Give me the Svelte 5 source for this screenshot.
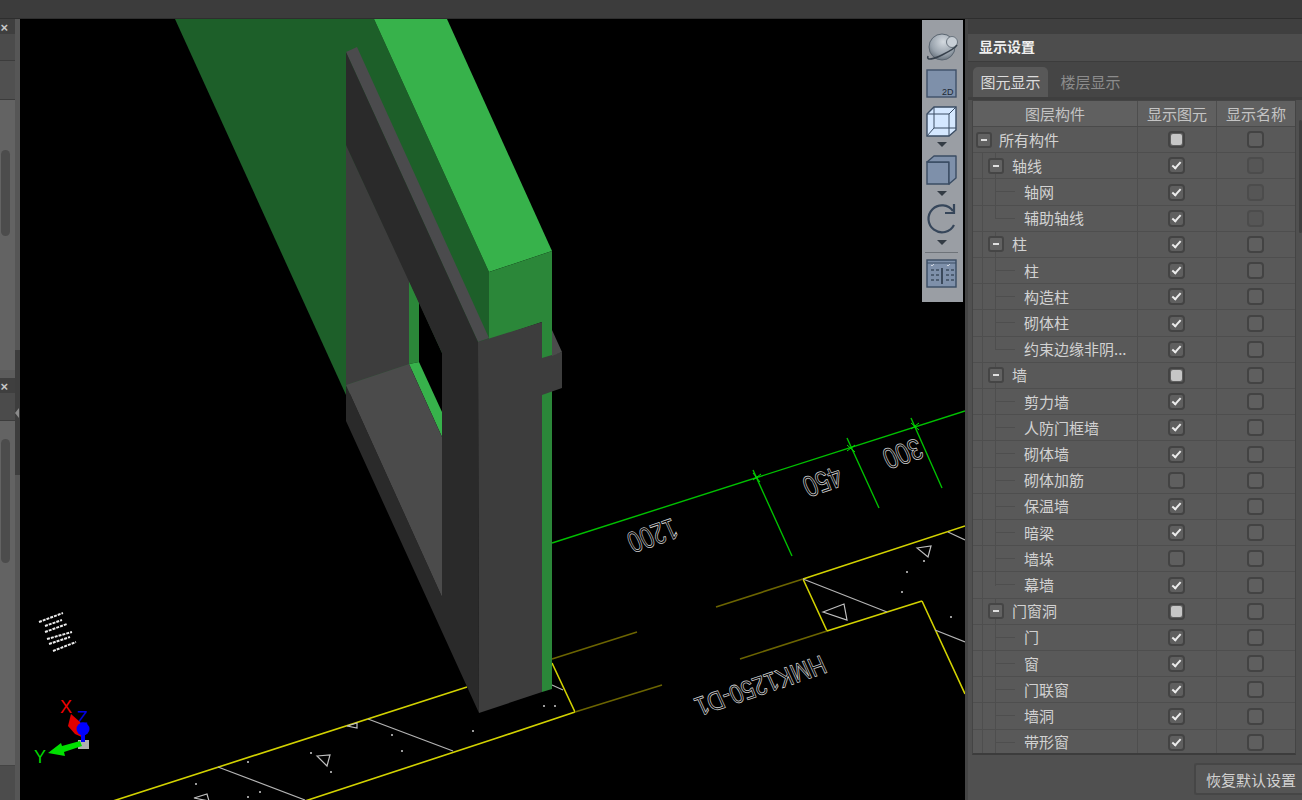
<script>
  const rows = [
    { level: 0, label: '所有构件', shape: 'part', name: 'off' },
    { level: 1, label: '轴线', shape: 'on', name: 'dis' },
    { level: 2, label: '轴网', shape: 'on', name: 'dis' },
    { level: 2, label: '辅助轴线', shape: 'on', name: 'dis' },
    { level: 1, label: '柱', shape: 'on', name: 'off' },
    { level: 2, label: '柱', shape: 'on', name: 'off' },
    { level: 2, label: '构造柱', shape: 'on', name: 'off' },
    { level: 2, label: '砌体柱', shape: 'on', name: 'off' },
    { level: 2, label: '约束边缘非阴...', shape: 'on', name: 'off' },
    { level: 1, label: '墙', shape: 'part', name: 'off' },
    { level: 2, label: '剪力墙', shape: 'on', name: 'off' },
    { level: 2, label: '人防门框墙', shape: 'on', name: 'off' },
    { level: 2, label: '砌体墙', shape: 'on', name: 'off' },
    { level: 2, label: '砌体加筋', shape: 'off', name: 'off' },
    { level: 2, label: '保温墙', shape: 'on', name: 'off' },
    { level: 2, label: '暗梁', shape: 'on', name: 'off' },
    { level: 2, label: '墙垛', shape: 'off', name: 'off' },
    { level: 2, label: '幕墙', shape: 'on', name: 'off' },
    { level: 1, label: '门窗洞', shape: 'part', name: 'off' },
    { level: 2, label: '门', shape: 'on', name: 'off' },
    { level: 2, label: '窗', shape: 'on', name: 'off' },
    { level: 2, label: '门联窗', shape: 'on', name: 'off' },
    { level: 2, label: '墙洞', shape: 'on', name: 'off' },
    { level: 2, label: '带形窗', shape: 'on', name: 'off' }
  ];

  const dots = [
    [311, 753], [331, 772], [248, 762], [392, 735], [402, 751], [473, 731], [196, 784], [260, 792],
    [248, 797], [924, 561], [907, 572], [902, 592], [951, 617], [555, 706], [544, 706]
  ];

  const triangles = [
    '823,612 844,604 847,620',
    '917,548 931,546 928,557',
    '317,756 330,755 327,766',
    '347,726 357,723 357,728',
    '194,798 207,794 209,801'
  ];

  // upside-down annotation text follows the slab's projected axes
  const labels = [
    { text: '1200', x: 672, y: 518, len: 50, cls: 'dim' },
    { text: '450', x: 837, y: 466, len: 39, cls: 'dim' },
    { text: '300', x: 917, y: 438, len: 39, cls: 'dim' },
    { text: 'HMK1250-D1', x: 821, y: 655, len: 136, cls: 'mark' }
  ];

  const isLast = (i) => rows[i].level === 2 && (i === rows.length - 1 ? false : rows[i + 1].level < 2);
</script>

<div class="app">
  <header class="topbar"></header>

  <aside class="dock">
    <div class="dock__panels">
      <section class="mini mini--first">
        <div class="mini__head">×</div>
        <div class="mini__band"></div>
        <div class="mini__band mini__band--b"></div>
        <div class="mini__body"><span class="thumb"></span></div>
      </section>
      <section class="mini mini--second">
        <div class="mini__head">×</div>
        <div class="mini__band mini__band--c"></div>
        <div class="mini__body"><span class="thumb thumb--long"></span></div>
        <div class="mini__foot"></div>
      </section>
    </div>
    <div class="splitter">
      <span class="splitter__grip"></span>
    </div>
  </aside>

  <main class="viewport">
    <svg class="scene" viewBox="0 0 945 781" width="945" height="781">
      <g transform="translate(-20 -19)">
        <!-- plan lines -->
        <g fill="none" stroke-width="1.6">
          <path stroke="#00c000" stroke-width="1.4" d="M552 543L965 411M753 470L792 556M847 438L879 508M911 418L942 488" />
          <path stroke="#00e000" stroke-width="1" d="M753 480L761 474M753 473L760 482M847 451L855 445M847 445L855 452M911 429L919 423M911 423L919 430" />
          <path stroke="#d2d200" d="M965 526L803 579M922 601L827 631M467 687L113 801M575 712L500 737L305 801M803 579L827 631M922 601L965 694M552 663L575 712" />
          <path stroke="#6b6400" d="M803 579L716 607M637 632L552 659M827 631L740 659M662 685L575 712" />
          <path stroke="#b4b4b4" stroke-width="1.2" d="M803 579L887 612M935 630L965 642M948 532L965 540M552 685L563 690M368 719L453 751M218 767L305 800" />
        </g>
        {#each triangles as points}
          <polygon {points} fill="none" stroke="#c0c0c0" stroke-width="1.2" />
        {/each}
        {#each dots as [cx, cy]}
          <rect x={cx - 1} y={cy - 1} width="2" height="2" fill="#9a9a9a" />
        {/each}
        {#each labels as l}
          <text class={l.cls} transform="matrix(-0.945 0.326 -0.41 -0.91 {l.x} {l.y})" textLength={l.len} lengthAdjust="spacingAndGlyphs">{l.text}</text>
        {/each}

        <!-- wall -->
        <polygon fill="#1d5f29" points="175,19 374,19 489,272 489,340 346,395" />
        <polygon fill="#37b24b" points="374,19 447,19 552,251 489,272" />
        <polygon fill="#2b8739" points="489,272 552,251 552,689 542,692 542,322 489,340" />

        <!-- door frame -->
        <polygon fill="#4b4b4d" points="346,52 357,47 489,338 478,342" />
        <polygon fill="#3d3d3d" points="346,145 409,280 409,364 346,385" />
        <polygon fill="#000" points="409,280 442,353 442,437 409,364" />
        <polygon fill="#2b8739" points="409,280 419,302 419,362 409,364" />
        <polygon fill="#37b24b" points="409,364 419,362 442,412 442,437" />
        <polygon fill="#2a2a2a" points="346,52 478,342 479,713 346,421 346,385 442,597 442,353 346,145" />
        <polygon fill="#4b4b4b" points="346,385 409,364 442,437 442,597" />
        <polygon fill="#3d3d3d" points="478,342 542,322 542,358 562,352 562,388 542,395 542,692 479,713" />
        <polygon fill="#4b4b4b" points="552,330 562,352 552,356" />

        <!-- view cube gizmo -->
        <text class="axis" x="60" y="713" fill="#f00000">X</text>
        <text class="axis" x="77" y="724" fill="#0000e6">Z</text>
        <text class="axis" x="34" y="763" fill="#00d800">Y</text>
        <polygon fill="#e00000" points="71,714 80,722 84,738 75,734 68,726" />
        <rect x="78" y="740" width="11" height="9" fill="#b0b0b0" />
        <polygon fill="#00e000" points="48,753 61,743 62,746 80,741 82,746 64,752 65,756" />
        <rect x="81" y="732" width="4" height="10" fill="#0000ff" />
        <circle cx="83" cy="729" r="6.5" fill="#0000ff" />

        <!-- small legend text far off in the plan -->
        <g fill="none" stroke="#ececec" stroke-width="2" stroke-dasharray="3 1">
          <path d="M39 622L63 613M45 626L62 620M45 632L67 624M47 639L72 632M49 644L70 637M53 651L76 642" />
        </g>
      </g>
    </svg>

    <nav class="tools">
      <svg class="tools__art" viewBox="0 0 41 282" width="41" height="282">
        <defs>
          <radialGradient id="ball" cx="0.55" cy="0.3" r="0.8">
            <stop offset="0" stop-color="#d4dae0" />
            <stop offset="0.6" stop-color="#98a2ac" />
            <stop offset="1" stop-color="#55606b" />
          </radialGradient>
        </defs>
        <!-- orbit -->
        <circle cx="20" cy="27" r="13" fill="url(#ball)" stroke="#5a6570" />
        <circle cx="30" cy="22" r="5.500" fill="#c8cfd6" stroke="#6a747e" />
        <path d="M6 36C4 41 12 39 20 35C28 31 34 27 35 25" fill="none" stroke="#36404b" stroke-width="1.6" />
        <!-- 2D -->
        <rect x="5" y="50" width="29" height="27" fill="#7e90aa" stroke="#3f5068" stroke-width="1.4" />
        <text class="tools__tag" x="20" y="75">2D</text>
        <!-- wire cube -->
        <path d="M5 94L12 87H34V110L27 116H5Z" fill="#d5e8ff" stroke="#3a4c63" stroke-width="1.4" />
        <path d="M5 94H27V116M27 94L34 87M12 87V108H34M12 108L5 116" fill="none" stroke="#3a4c63" />
        <polygon points="15,122 25,122 20,127" fill="#333b44" />
        <!-- solid cube -->
        <path d="M5 142H27V164H5Z" fill="#7e90aa" stroke="#3a4c63" stroke-width="1.4" />
        <path d="M5 142L12 136H34V158L27 164V142Z" fill="#7e90aa" stroke="#3a4c63" stroke-width="1.4" stroke-linejoin="round" />
        <polygon points="15,171 25,171 20,176" fill="#333b44" />
        <!-- rotate -->
        <path d="M31 191A13.500 13.500 0 1 0 32 205" fill="none" stroke="#36465a" stroke-width="2.200" />
        <path d="M23 193L32 193L32 184" fill="none" stroke="#36465a" stroke-width="2.200" />
        <polygon points="15,220 25,220 20,225" fill="#333b44" />
        <path d="M3 232.500H36" stroke="#6e7379" />
        <!-- layer list -->
        <rect x="5" y="240" width="29" height="27" fill="#7e90aa" stroke="#3a4c63" stroke-width="1.4" />
        <path d="M5 243H34" stroke="#3a4c63" />
        <path d="M20 248V264" stroke="#1f2c3a" stroke-width="1.4" />
        <path d="M9 245l1 1 2-2M25 245l1 1 2-2" fill="none" stroke="#e6e9ec" stroke-width="0.8" />
        <path d="M9 250h3m2 0h3M9 255h3m2 0h3M9 260h3m2 0h3M24 250h3m2 0h3M24 255h3m2 0h3M24 260h3m2 0h3" stroke="#1f2c3a" stroke-width="1.2" />
      </svg>
    </nav>
  </main>

  <aside class="panel">
    <div class="panel__gap"></div>
    <h2 class="panel__title">显示设置</h2>
    <div class="tabs">
      <button class="tab tab--active">图元显示</button>
      <button class="tab">楼层显示</button>
    </div>
    <div class="table">
      <div class="row row--head">
        <div class="cell">图层构件</div>
        <div class="cell">显示图元</div>
        <div class="cell">显示名称</div>
      </div>
      {#each rows as row, i}
        <div class="row">
          <div class="cell cell--tree tree-{row.level}">
            {#if row.level > 0}<span class="rail rail--outer"></span>{/if}
            {#if row.level > 0}<span class="rail" class:rail--last={isLast(i)}></span>{/if}
            {#if row.level === 2}<span class="stub"></span>{/if}
            {#if row.level < 2}<span class="fold"></span>{/if}
            <span class="label">{row.label}</span>
          </div>
          <div class="cell cell--box"><span class="check check--{row.shape}"></span></div>
          <div class="cell cell--box"><span class="check check--{row.name}"></span></div>
        </div>
      {/each}
    </div>
    <span class="scroll"></span>
    <div class="panel__foot">
      <button class="restore">恢复默认设置</button>
    </div>
  </aside>
</div>

<style>
  :global(body) {
    margin: 0;
    background: #000;
  }

  .app {
    display: grid;
    grid-template-columns: 20px 945px 337px;
    grid-template-rows: 19px 781px;
    width: 1302px;
    height: 800px;
    overflow: hidden;
    font-family: "Noto Sans CJK SC", "Noto Sans", sans-serif;
  }

  .topbar {
    grid-column: 1 / -1;
    background: #3c3c3c;
    border-bottom: 1px solid #2e2e2e;
    box-sizing: border-box;
  }

  .dock {
    display: flex;
    background: #565656;
  }

  .dock__panels {
    width: 15px;
    display: flex;
    flex-direction: column;
  }

  .mini {
    display: flex;
    flex-direction: column;
    overflow: hidden;
  }

  .mini--first {
    height: 359px;
  }

  .mini--second {
    flex: 1;
  }

  .mini__head {
    height: 15px;
    flex: none;
    background: #3f3f3f;
    color: #c8c8c8;
    font: 700 13px/17px "Liberation Sans", sans-serif;
    text-align: right;
    padding-right: 7px;
    box-sizing: border-box;
    overflow: hidden;
  }

  .mini__band {
    height: 27px;
    flex: none;
    background: #4b4b4b;
    border-bottom: 1px solid #3c3c3c;
    box-sizing: border-box;
  }

  .mini__band--b {
    height: 39px;
    background: #505050;
  }

  .mini__band--c {
    height: 28px;
  }

  .mini__body {
    flex: 1;
    background: #636363;
    padding: 50px 5px 0 1px;
    border-bottom: 8px solid #5c5c5c;
    box-sizing: border-box;
  }

  .mini--second .mini__body {
    padding-top: 18px;
    border-bottom: 0;
  }

  .thumb {
    display: block;
    width: 9px;
    height: 86px;
    border-radius: 5px;
    background: #4c4c4c;
  }

  .thumb--long {
    height: 124px;
  }

  .mini__foot {
    height: 34px;
    flex: none;
    background: #4c4c4c;
    border-top: 1px solid #444;
  }

  .splitter {
    position: relative;
    width: 5px;
    background: linear-gradient(#565656 331px, #3d3d3d 331px, #3d3d3d 456px, #565656 456px);
  }

  .splitter__grip {
    position: absolute;
    top: 389px;
    left: 0;
    border: 5px solid transparent;
    border-left-width: 0;
    border-right: 4px solid #8a8a8a;
  }

  .viewport {
    position: relative;
    background: #000;
    overflow: hidden;
  }

  .scene {
    display: block;
  }

  .dim,
  .mark {
    font-family: "Liberation Sans", sans-serif;
    fill: none;
    stroke: #d0d0d0;
    stroke-width: 0.8px;
  }

  .dim {
    font-size: 30px;
  }

  .mark {
    font-size: 27px;
  }

  .axis {
    font: 400 18px "Liberation Sans", sans-serif;
  }

  .tools {
    position: absolute;
    top: 1px;
    left: 902px;
    width: 41px;
    height: 282px;
    background: #9a9ea4;
  }

  .tools__art {
    display: block;
  }

  .tools__tag {
    font: 400 9px "Liberation Sans", sans-serif;
    fill: #1d2833;
  }

  .panel {
    position: relative;
    display: flex;
    flex-direction: column;
    background: #505050;
    border-left: 3px solid #454545;
    box-sizing: border-box;
    color: #d2d2d2;
  }

  .panel__gap {
    height: 15px;
    flex: none;
    background: #3f3f3f;
  }

  .panel__title {
    height: 27px;
    flex: none;
    margin: 0;
    padding-left: 11px;
    background: #4d4d4d;
    border-bottom: 1px solid #3c3c3c;
    box-sizing: content-box;
    color: #f0f0f0;
    font-size: 14px;
    font-weight: 700;
    line-height: 25px;
  }

  .tabs {
    height: 35px;
    flex: none;
    display: flex;
    align-items: flex-end;
    padding-left: 5px;
    background: #454545;
    border-bottom: 3px solid #3f3f3f;
    box-sizing: content-box;
  }

  .tab {
    width: 75px;
    height: 30px;
    padding: 0;
    border: 0;
    border-radius: 5px 5px 0 0;
    background: transparent;
    color: #8c8c8c;
    font: inherit;
    font-size: 15px;
    line-height: 28px;
    text-align: center;
  }

  .tab + .tab {
    margin-left: 5px;
  }

  .tab--active {
    background: #585858;
    color: #dcdcdc;
  }

  .table {
    width: 324px;
    height: 655px;
    margin-left: 4px;
    flex: none;
    background: #595959;
    border: 1px solid #444;
    border-bottom: 2px solid #3c3c3c;
    box-sizing: border-box;
    overflow: hidden;
  }

  .row {
    display: grid;
    grid-template-columns: 165px 79px 79px;
    height: 26.217px;
    box-sizing: border-box;
    border-bottom: 1px solid #4e4e4e;
  }

  .row--head {
    height: 26px;
    background: #606060;
    color: #c4c4c4;
    font-size: 15px;
    border-bottom: 1px solid #4a4a4a;
  }

  .cell {
    position: relative;
    display: flex;
    align-items: center;
    justify-content: center;
    border-right: 1px solid #4e4e4e;
  }

  .cell--box {
    padding-right: 2px;
  }

  .row--head .cell {
    line-height: 24px;
  }

  .cell--tree {
    justify-content: flex-start;
    font-size: 15px;
    line-height: 24px;
    white-space: nowrap;
    color: #d2d2d2;
  }

  .tree-0 {
    padding-left: 3px;
  }

  .tree-1 {
    padding-left: 15px;
  }

  .tree-2 {
    padding-left: 51px;
  }

  .fold {
    position: relative;
    flex: none;
    width: 16px;
    height: 16px;
    margin-right: 7px;
    background: #626262;
    border: 2px solid #454545;
    border-radius: 3px;
    box-sizing: border-box;
  }

  .fold::after {
    content: "";
    position: absolute;
    left: 3px;
    top: 5px;
    width: 6px;
    height: 2px;
    background: #e0e0e0;
  }

  .tree-1 .fold {
    margin-right: 8px;
  }

  .rail {
    position: absolute;
    left: 22px;
    top: -1px;
    bottom: 0;
    width: 1px;
    background: #4e4e4e;
  }

  .rail--outer {
    left: 9px;
  }

  .rail--last {
    bottom: 12px;
  }

  .stub {
    position: absolute;
    left: 22px;
    top: 12px;
    width: 20px;
    height: 1px;
    background: #4e4e4e;
  }

  .check {
    display: block;
    position: relative;
    width: 17px;
    height: 17px;
    background: #5f5f5f;
    border: 2px solid #434343;
    border-radius: 4px;
    box-sizing: border-box;
  }

  .check--dis {
    background: #565656;
    border-color: #4c4c4c;
  }

  .check--part::after {
    content: "";
    position: absolute;
    inset: 1px;
    border-radius: 2px;
    background: #c6c6c6;
  }

  .check--on::after {
    content: "";
    position: absolute;
    left: 4px;
    top: 1px;
    width: 3px;
    height: 7px;
    border: solid #ececec;
    border-width: 0 2px 2px 0;
    transform: rotate(42deg);
  }

  .scroll {
    position: absolute;
    right: 0;
    top: 101px;
    width: 3px;
    height: 113px;
    background: #3f3f3f;
    border-radius: 2px;
  }

  .panel__foot {
    flex: 1;
    display: flex;
    justify-content: flex-end;
    padding-top: 8px;
    overflow: hidden;
  }

  .restore {
    width: 108px;
    height: 32px;
    flex: none;
    padding: 0 0 0 10px;
    background: #555;
    border: 2px solid #464646;
    border-right: 0;
    border-radius: 3px 0 0 3px;
    color: #d2d2d2;
    font: inherit;
    font-size: 15px;
    text-align: left;
    white-space: nowrap;
    box-sizing: border-box;
  }
</style>
